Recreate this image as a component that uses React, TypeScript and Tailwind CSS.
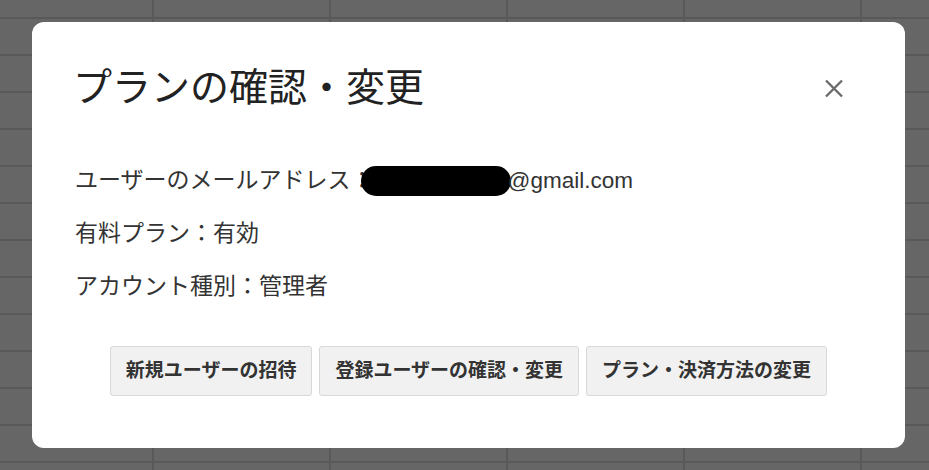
export default function App() {
  return (
    <div className="w-[929px] h-[470px] flex items-center pl-[32px] bg-[#666666] bg-[linear-gradient(to_right,#595959_2px,transparent_2px),linear-gradient(to_bottom,#595959_2px,transparent_2px)] bg-size-[177px_37px] bg-position-[152px_17px] font-['Liberation_Sans','Noto_Sans_CJK_JP',sans-serif]">
      <div className="w-[873px] h-[426px] bg-white rounded-[12px] flex flex-col px-[44px] pt-[44px]">
        {/* header */}
        <div className="flex items-center justify-between h-[44px]">
          <h1 className="text-[39px] leading-[44px] text-[#222222] font-normal -ml-[3px]">プランの確認・変更</h1>
          <button className="w-[18px] h-[19px] mr-[18px] text-[#6b6b6b]" aria-label="close">
            <svg viewBox="0 0 18 19" width="18" height="19" fill="none" stroke="currentColor" strokeWidth="2.4">
              <path d="M1 1.5 L17 17.5 M17 1.5 L1 17.5" />
            </svg>
          </button>
        </div>

        {/* info */}
        <div className="mt-[44px] flex flex-col text-[23px] text-[#333333] -ml-[1px]">
          <div className="h-[53px] flex items-center">
            <span>ユーザーのメールアドレス：</span>
            <span className="inline-block w-[150px] h-[30px] rounded-full bg-black -ml-[13px]" />
            <span className="-ml-[3px] text-[22.5px]">@gmail.com</span>
          </div>
          <div className="h-[53px] flex items-center">有料プラン：有効</div>
          <div className="h-[53px] flex items-center">アカウント種別：管理者</div>
        </div>

        {/* actions */}
        <div className="mt-[33px] flex justify-center gap-[7px]">
          {["新規ユーザーの招待", "登録ユーザーの確認・変更", "プラン・決済方法の変更"].map((label) => (
            <button
              key={label}
              className="h-[50px] px-[15px] bg-[#f1f1f1] border border-[#d8d8d8] rounded-[3px] text-[19px] font-bold text-[#333333]"
            >
              {label}
            </button>
          ))}
        </div>
      </div>
    </div>
  );
}
